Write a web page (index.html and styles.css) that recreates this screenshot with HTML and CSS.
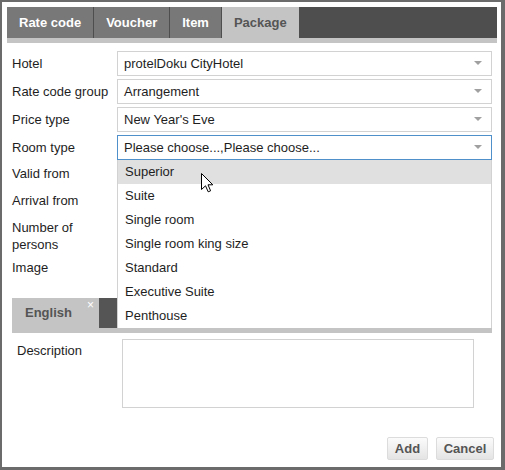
FILE: index.html
```html
<!DOCTYPE html>
<html>
<head>
<meta charset="utf-8">
<link rel="stylesheet" href="styles.css">
</head>
<body>
<div class="dialog">
  <div class="tabbar">
    <div class="tab">Rate code</div>
    <div class="tab">Voucher</div>
    <div class="tab">Item</div>
    <div class="tab active">Package</div>
  </div>
  <div class="tabstrip"></div>

  <div class="form">
    <div class="row"><div class="label">Hotel</div><div class="select">protelDoku CityHotel<span class="arrow"></span></div></div>
    <div class="row"><div class="label">Rate code group</div><div class="select">Arrangement<span class="arrow"></span></div></div>
    <div class="row"><div class="label">Price type</div><div class="select">New Year's Eve<span class="arrow"></span></div></div>
    <div class="row room"><div class="label">Room type</div>
      <div class="select focused">Please choose...,Please choose...<span class="arrow"></span>
        <ul class="dropdown">
          <li class="hl">Superior</li>
          <li>Suite</li>
          <li>Single room</li>
          <li>Single room king size</li>
          <li>Standard</li>
          <li>Executive Suite</li>
          <li>Penthouse</li>
          <li class="cursor"><svg width="13" height="20" viewBox="0 0 13 20"><path d="M0.5 0.5 L0.5 16.5 L4.5 12.8 L7.2 18.8 L9.6 17.8 L7 11.8 L11.8 11.8 Z" fill="#fff" stroke="#000" stroke-width="1" stroke-linejoin="miter"/></svg></li>
        </ul>
      </div>
    </div>
    <div class="row plain r-valid"><div class="label">Valid from</div></div>
    <div class="row plain r-arrival"><div class="label">Arrival from</div></div>
    <div class="row plain r-persons"><div class="label">Number of<br>persons</div></div>
    <div class="row plain r-image"><div class="label">Image</div></div>

    <div class="langbar">
      <div class="langtab">English<span class="close">×</span></div>
    </div>
    <div class="langstrip"></div>

    <div class="desc">
      <div class="label">Description</div>
      <textarea class="textarea"></textarea>
    </div>
  </div>

  <div class="buttons">
    <button class="btn btn-add">Add</button>
    <button class="btn btn-cancel">Cancel</button>
  </div>
</div>
</body>
</html>
```

FILE: styles.css
```css
html, body {
  margin: 0;
  padding: 0;
  background: #6b6b6b;
  font-family: "Liberation Sans", Arial, sans-serif;
  font-size: 13px;
  color: #222;
}

.dialog {
  margin: 2px;
  width: 499px;
  height: 465px;
  box-sizing: border-box;
  padding: 5px 4px 0 5px;
  background: #fff;
}

.tabbar {
  display: flex;
  gap: 1px;
  height: 31px;
  background: #4e4e4e;
}

.tab {
  padding: 0 12px;
  line-height: 31px;
  background: #787878;
  color: #fff;
  font-weight: bold;
}

.tab.active {
  background: #c4c4c4;
  color: #555;
}

.tabstrip {
  height: 5px;
  background: #c4c4c4;
}

.form {
  padding: 8px 5px 0 5px;
}

.row {
  display: flex;
  height: 25px;
  margin-bottom: 3px;
}

.row.room {
  margin-bottom: 1px;
}

.row.plain { margin-bottom: 0; }
.r-valid { height: 27px; }
.r-arrival { height: 27px; }
.r-persons { height: 40px; }
.r-image { height: 35px; }

.label {
  width: 105px;
  flex: none;
  padding-top: 4px;
  line-height: 17px;
  color: #1e1e1e;
}

.select {
  position: relative;
  width: 375px;
  height: 25px;
  box-sizing: border-box;
  border: 1px solid #d2d2d2;
  padding-left: 6px;
  line-height: 23px;
  color: #1e1e1e;
}

.select.focused {
  border-color: #4f8fca;
}

.arrow {
  position: absolute;
  right: 9px;
  top: 9px;
  width: 0;
  height: 0;
  border-left: 4px solid transparent;
  border-right: 4px solid transparent;
  border-top: 4px solid #a0a0a0;
}

.dropdown {
  position: absolute;
  z-index: 5;
  left: -1px;
  top: 24px;
  width: 375px;
  box-sizing: border-box;
  margin: 0;
  padding: 0;
  list-style: none;
  background: #fff;
  border-left: 1px solid #d2d2d2;
  border-right: 1px solid #d2d2d2;
}

.dropdown li {
  height: 24px;
  line-height: 24px;
  padding-left: 7px;
  color: #1e1e1e;
}

.dropdown li.hl {
  background: #e0e0e0;
}

.dropdown li.cursor {
  position: absolute;
  left: 83px;
  top: 13px;
  height: 20px;
  padding: 0;
  line-height: 0;
}

.langbar {
  display: flex;
  height: 30px;
  margin-top: 8px;
  background: #555;
}

.langtab {
  position: relative;
  width: 87px;
  box-sizing: border-box;
  padding-left: 13px;
  line-height: 30px;
  background: #c4c4c4;
  color: #555;
  font-weight: bold;
}

.close {
  position: absolute;
  right: 5px;
  top: 2px;
  line-height: 10px;
  font-size: 12px;
  font-weight: normal;
  color: #fff;
}

.langstrip {
  height: 5px;
  background: #c4c4c4;
}

.desc {
  display: flex;
  margin-top: 6px;
  padding-left: 5px;
}

.desc .label {
  padding-top: 3px;
}

.textarea {
  display: block;
  width: 352px;
  height: 69px;
  box-sizing: border-box;
  margin: 0;
  border: 1px solid #d2d2d2;
  resize: none;
  font-family: inherit;
}

.buttons {
  display: flex;
  justify-content: flex-end;
  gap: 8px;
  margin-top: 29px;
  padding-right: 3px;
}

.btn {
  height: 23px;
  padding: 0;
  margin: 0;
  border: 1px solid #dcdcdc;
  border-radius: 2px;
  background: linear-gradient(#fbfbfb, #e4e4e4);
  color: #555;
  font-family: "Liberation Sans", Arial, sans-serif;
  font-size: 13px;
  font-weight: bold;
  text-align: center;
}

.btn-add { width: 41px; }
.btn-cancel { width: 58px; }
```
